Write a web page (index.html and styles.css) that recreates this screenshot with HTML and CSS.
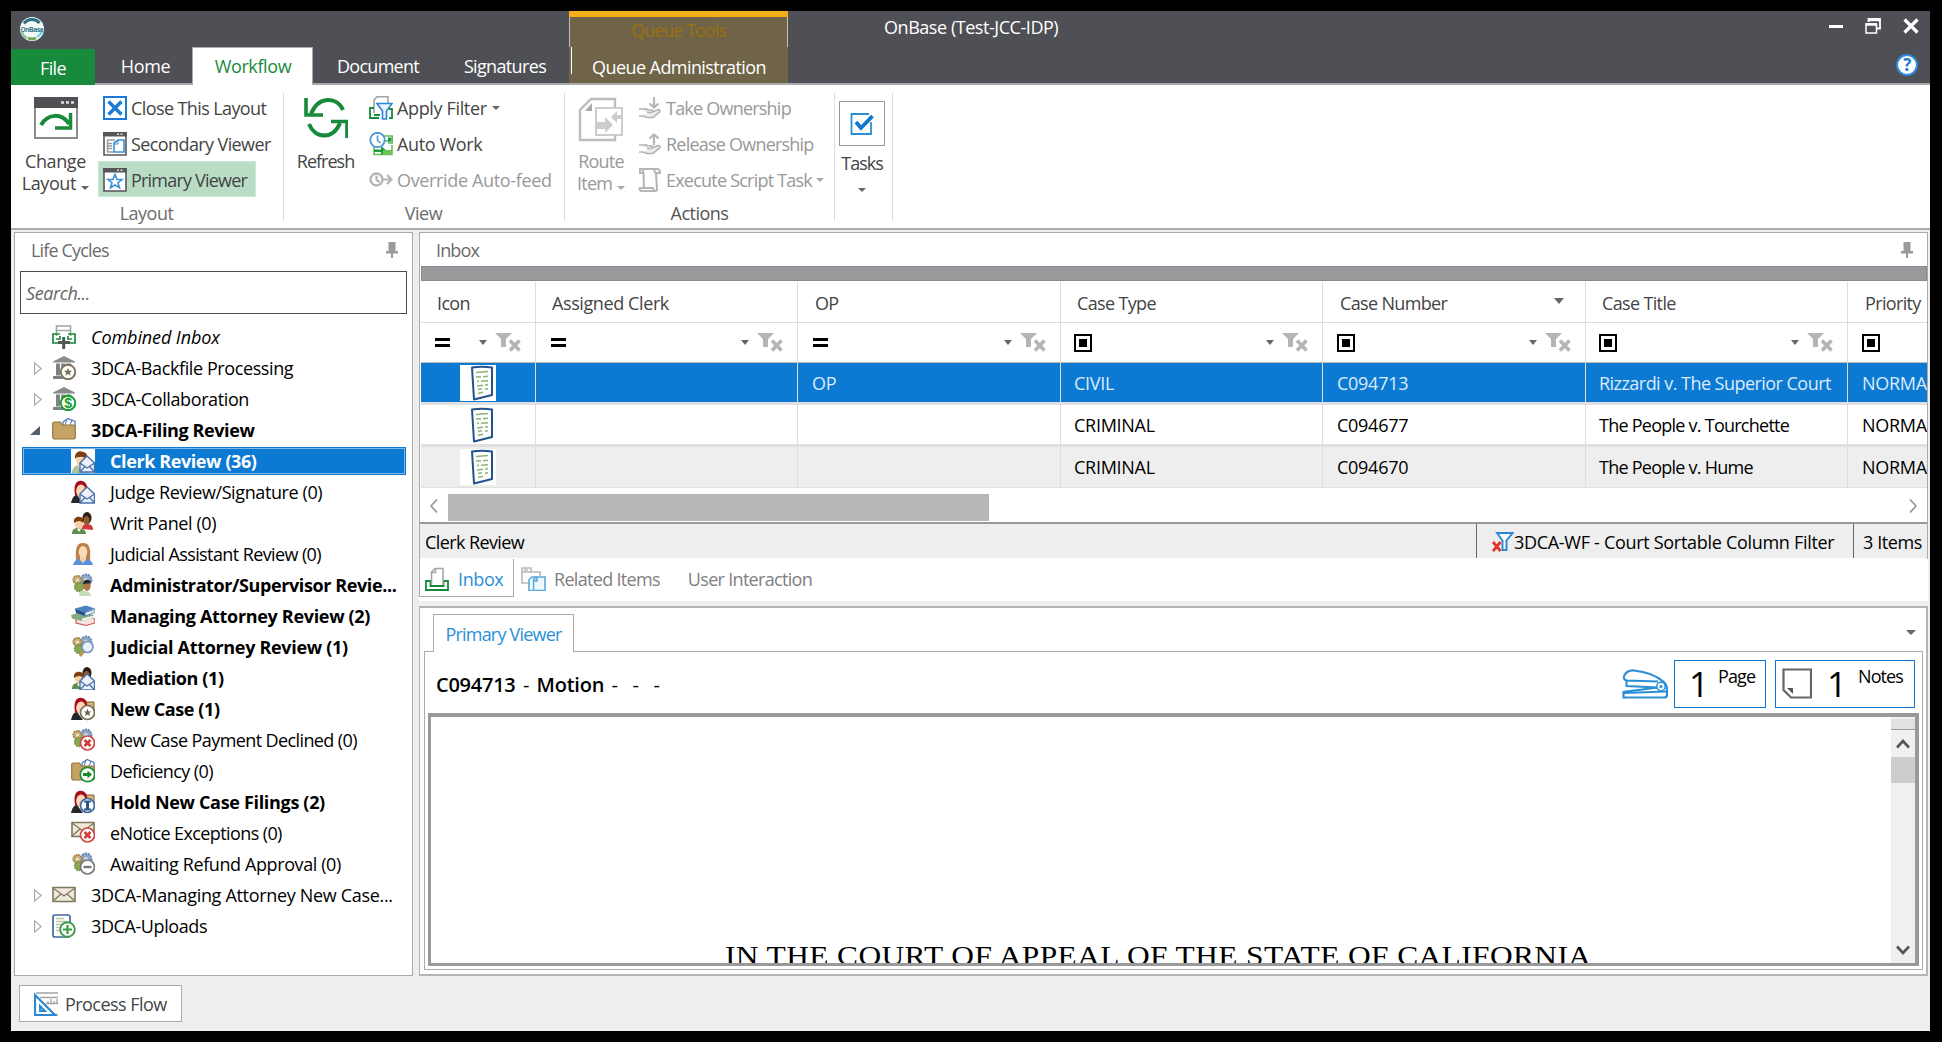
FILE: index.html
```html
<!DOCTYPE html>
<html lang="en">
<head>
<meta charset="utf-8">
<title>OnBase (Test-JCC-IDP)</title>
<link rel="stylesheet" href="styles.css">
</head>
<body>
<svg class="defs" aria-hidden="true">
  <symbol id="window" viewBox="0 0 24 24"><path d="M1 1h22v22H1z" fill="#fff" stroke="#55565a" stroke-width="1.6"/><path d="M0 0h24v4.5H0z" fill="#55565a"/><path d="M14 2.2h2m1.5 0h2m1.500h2" stroke="#ddd" stroke-width="1.4"/></symbol>
  <symbol id="man" viewBox="0 0 24 24"><path d="M1 24c0-6 4-8 8-8s9 2 9 8z" fill="#a9c29a"/><path d="M7 17l3 4 3-4z" fill="#fff"/><ellipse cx="10" cy="11" rx="5" ry="6.500" fill="#f6d3ae"/><path d="M4 10c-1-7 5-9 8-7 4 0 5 4 3 8-1-3-4-4-6-3-2 0-4 0-5 2z" fill="#7c3f10"/></symbol>
  <symbol id="redhead" viewBox="0 0 24 24"><path d="M4 15C2 4 6 0 11 1c5 1 6 6 5 13L9 17z" fill="#a60f1a"/><path d="M0 23c1-5 3-8 6-8l6 8z" fill="#25272b"/><ellipse cx="10" cy="11" rx="4.800" ry="6.500" fill="#f8d8b8"/></symbol>
  <symbol id="letter" viewBox="0 0 24 24"><path d="M9 14l7-7 7.500 7v9H9z" fill="#eef3fb" stroke="#4a6ea9" stroke-width="1.400"/><path d="M9 14l7 5 7.500-5M9 23l5-5.500M23.500 23l-5-5.500" fill="none" stroke="#4a6ea9" stroke-width="1.300"/></symbol>
  <symbol id="pair" viewBox="0 0 24 24"><path d="M11 18c0-4 2-5 5-5 4 0 6 2 6 6z" fill="#d23a3a"/><ellipse cx="16" cy="7" rx="4.500" ry="6" fill="#2c1a14"/><ellipse cx="15.500" cy="9.500" rx="3" ry="4.500" fill="#8f5a34"/><path d="M1 23c0-4 2-6 6-6s8 2 8 6z" fill="#5d8f4d"/><path d="M6 18l2 3 2-3z" fill="#fff"/><ellipse cx="8" cy="13" rx="4" ry="5" fill="#f6d0a8"/><path d="M3 12c-1-5 3-7 6-6 3 0 4 3 3 6-3-3-6-2-9 0z" fill="#7c3f10"/></symbol>
  <symbol id="woman" viewBox="0 0 24 24"><path d="M5 18C4 5 6 1 12 1s8 4 7 17z" fill="#b9824b"/><path d="M2 23c1-4 4-6 7-6h6c3 0 6 2 7 6z" fill="#5b8fd8"/><path d="M9 14h6v4l-3 3-3-3z" fill="#f6cfa5"/><ellipse cx="12" cy="10" rx="4.300" ry="6" fill="#fbdcb9"/></symbol>
  <symbol id="gears" viewBox="0 0 24 24"><circle cx="15" cy="7" r="5.500" fill="#8fa9cb" stroke="#6a89b3" stroke-width="2" stroke-dasharray="2.200 .8"/><circle cx="15" cy="7" r="2" fill="#cfdbea"/><circle cx="6.500" cy="7" r="4.200" fill="#cbb07a" stroke="#a68340" stroke-width="1.800" stroke-dasharray="1.800 .7"/><circle cx="6.500" cy="7" r="1.500" fill="#eee6d4"/><circle cx="8" cy="14" r="4.200" fill="#8aa752" stroke="#7a9548" stroke-width="2" stroke-dasharray="1.800 .7"/></symbol>
  <symbol id="bank" viewBox="0 0 24 24"><path d="M1 5.500L12 0l11 5.500v1H1z" fill="#8a8b8e"/><path d="M4 7.500h4v12H4zM9.200 7.500h4v12h-4zM14.500 7.500h4.500v12h-4.500zM1 20h14v3H1z" fill="#808184"/></symbol>
  <symbol id="folder" viewBox="0 0 24 24"><path d="M11 4l5-3.500 7 3V10H11z" fill="#fff" stroke="#4a78b8" stroke-width="1.200"/><path d="M15 1l-2 6M20 2l-2 5" stroke="#4a78b8"/><path d="M.7 6Q.7 4 2.500 4h6l1.500 3h12q1.300 0 1.300 1.500V19q0 2-2 2H3Q.7 21 .7 19z" fill="#c5a365" stroke="#97783f" stroke-width="1.200"/></symbol>
  <symbol id="mail" viewBox="0 0 24 24"><path d="M1 4.500h22v14H1z" fill="#efe9da" stroke="#81765f" stroke-width="1.600"/><path d="M1 5l11 8L23 5M1 18l8-7M23 18l-8-7" fill="none" stroke="#81765f" stroke-width="1.300"/></symbol>
  <symbol id="star" viewBox="0 0 24 24"><path d="M12 2l3 7h7l-5.500 4.500 2 7.500L12 17l-6.500 4 2-7.500L2 9h7z"/></symbol>
  <symbol id="inbox" viewBox="0 0 24 24"><path d="M1 14h4.500v5h13v-5H23v9H1z" fill="#fff" stroke="#178a3b" stroke-width="1.800"/><path d="M6.500 18V5L10 1.500h8V18" fill="#fff" stroke="#a2a3a6" stroke-width="1.500"/><path d="M10.500 2v3.500H7" fill="none" stroke="#a2a3a6" stroke-width="1.500"/></symbol>
  <symbol id="funnelx" viewBox="0 0 26 20"><path d="M0 0h17l-6 6v8H6V6z" fill="#b5b5b5"/><path d="M15 7.500l9.500 10M24.500 7.500L15 17.500" stroke="#b5b5b5" stroke-width="3.600"/></symbol>
  <symbol id="paper" viewBox="0 0 36 36"><path d="M12 2.500Q22 1 32 2.500V30l-18 4.500z" fill="#fdfefd" stroke="#21548c" stroke-width="2" stroke-linejoin="round"/><path d="M16 7.500l12-1M16 12l5-.3m2 0l5-.4M17 16.500l2-.2m2 0l7-.6M17 21l6-.8m2 0l3-.6M18 24.500l4-.8M18 28.500l5-1.200m2-3l3-.6" stroke="#8fb376" stroke-width="1.500"/></symbol>
  <symbol id="pin" viewBox="0 0 12 16"><path d="M2.500 0h7v9H12v2.500H7V16H5v-4.500H0V9h2.500z" fill="#9a9a9c"/></symbol>
  <symbol id="hand" viewBox="0 0 24 24"><path d="M1 13h5q2-.5 4 1h4q1.500 2-1 2.500H9M14 16l6-2.500q3 0 1.500 2.500L15 21.500H9L5 20H1" fill="#eee" stroke="#b5b5b5" stroke-width="1.700"/></symbol>
  <symbol id="closed" viewBox="0 0 8 13"><path d="M.6.800v11.400L7.200 6.500z" fill="#fff" stroke="#a6a6a6" stroke-width="1.100"/></symbol>
</svg>

<div class="window">
  <header class="titlebar">
    <div class="tabs-side">
      <div class="logo-row">
        <svg class="logo" viewBox="0 0 24 24"><circle cx="12" cy="12" r="12" fill="#f4f8f6"/><path d="M4 6.500A9.800 9.800 0 0 1 19.500 6" fill="none" stroke="#2c7180" stroke-width="3"/><path d="M2 15a10 10 0 0 0 5 6" fill="none" stroke="#7fc4a0" stroke-width="2"/><path d="M8 21a10 10 0 0 0 8 0" fill="none" stroke="#69a84f" stroke-width="2.500"/><path d="M17 20a10 10 0 0 0 5-7" fill="none" stroke="#55d3ee" stroke-width="2"/><text x="12" y="14.500" text-anchor="middle" class="logo-text">OnBase</text></svg>
      </div>
      <nav class="tabs">
        <a class="tab file"><span>File</span></a>
        <a class="tab home"><span>Home</span></a>
        <a class="tab active"><span>Workflow</span></a>
        <a class="tab document"><span>Document</span></a>
        <a class="tab signatures"><span>Signatures</span></a>
      </nav>
    </div>
    <div class="context">
      <div class="context-name"><span>Queue Tools</span></div>
      <div class="context-tab"><span>Queue Administration</span></div>
    </div>
    <div class="caption"><span>OnBase (Test-JCC-IDP)</span></div>
    <div class="controls">
      <div class="control-row">
        <svg width="14" height="16" viewBox="0 0 14 16"><path d="M0 8.500h14" stroke="#fff" stroke-width="3"/></svg>
        <svg width="16" height="16" viewBox="0 0 16 16"><path d="M3.500 4V1h11.500v9.500h-3" fill="none" stroke="#fff" stroke-width="1.800"/><path d="M1 6h10.500v9H1z" fill="none" stroke="#fff" stroke-width="1.500"/><path d="M3 2h12M.5 6.500H12" stroke="#fff" stroke-width="2.500"/></svg>
        <svg width="16" height="16" viewBox="0 0 16 16"><path d="M1.500 1.500l13 13M14.500 1.500l-13 13" stroke="#fff" stroke-width="3.200"/></svg>
      </div>
      <div class="help">?</div>
    </div>
  </header>

  <section class="ribbon">
    <div class="group layout">
      <div class="group-body">
        <div class="big change">
          <svg width="44" height="42" viewBox="0 0 44 42"><path d="M1 1h42v40H1z" fill="#fff" stroke="#8a8b8e" stroke-width="2"/><path d="M0 0h44v11H0z" fill="#505155"/><path d="M27 5.500h3m2 0h3m2 0h3" stroke="#ddd" stroke-width="2.500"/><path d="M7 28c7-12 21-12 28-1" fill="none" stroke="#178a3b" stroke-width="4"/><path d="M36.500 16v15H21" fill="none" stroke="#178a3b" stroke-width="3.500"/></svg>
          <span>Change</span><span>Layout <i class="caret low"></i></span>
        </div>
        <div class="stack">
          <div class="cmd"><svg width="24" height="24" viewBox="0 0 24 24"><path d="M1 1h22v22H1z" fill="#fff" stroke="#1a7bd2" stroke-width="2"/><path d="M5.500 5.500l13 13M18.500 5.500l-13 13" stroke="#1a7bd2" stroke-width="3.400"/></svg><span>Close This Layout</span></div>
          <div class="cmd"><svg width="24" height="24" viewBox="0 0 24 24"><use href="#window"/><path d="M12 8H4.500v12H10M5 11.500h4M5 14h4M5 16.500h4" fill="none" stroke="#9a9a9c" stroke-width="1.400"/><path d="M11 11l4-3h6v12H11z" fill="#fff" stroke="#3a8fd8" stroke-width="1.600"/><path d="M11.500 12H15V8.500" fill="none" stroke="#3a8fd8"/></svg><span>Secondary Viewer</span></div>
          <div class="cmd on"><svg width="24" height="24" viewBox="0 0 24 24"><use href="#window"/><path d="M12 6.500l2 5h5l-4 3.200 1.500 5L12 17l-4.500 2.700 1.500-5-4-3.200h5z" fill="#fff" stroke="#3a8fd8" stroke-width="1.600"/></svg><span>Primary Viewer</span></div>
        </div>
      </div>
      <div class="group-name">Layout</div>
    </div>
    <div class="group view">
      <div class="group-body">
        <div class="big refresh">
          <svg width="44" height="42" viewBox="0 0 44 42"><path d="M7 17C14-1 33-1 39 13M5 27c6 15 24 16 31-1" fill="none" stroke="#178a3b" stroke-width="4"/><path d="M2 1v17h17M43 41V24.500H27" fill="none" stroke="#178a3b" stroke-width="3.600"/></svg>
          <span>Refresh</span>
        </div>
        <div class="stack">
          <div class="cmd"><svg width="24" height="24" viewBox="0 0 24 24"><path d="M5 17V4l3-3.200h11V8" fill="none" stroke="#a2a3a6" stroke-width="1.600"/><path d="M5 12H1v10h9M20 13h3v9h-3M5 19h6" fill="none" stroke="#178a3b" stroke-width="1.800"/><path d="M8 7.500h15l-5.500 7.500v8h-4v-8z" fill="#e8f3fc" stroke="#2b87d3" stroke-width="1.600"/></svg><span>Apply Filter</span><i class="caret"></i></div>
          <div class="cmd"><svg width="24" height="24" viewBox="0 0 24 24"><path d="M13 4h10.300v7H20V9h-4M5 14v8.500h18V13" fill="#fff" stroke="#62bd52" stroke-width="1.600"/><path d="M19 5.500h3.500v4H19zM5 17.500h7V14l6 5-6 4v-3H5z" fill="#1f9a3c"/><path d="M14 18h9v5h-9z" fill="#6cc355"/><circle cx="8.500" cy="8" r="7.200" fill="#fff" stroke="#4b97d9" stroke-width="1.800"/><path d="M8.500 3.500v5l3 2.500" fill="none" stroke="#4b97d9" stroke-width="1.600"/></svg><span>Auto Work</span></div>
          <div class="cmd off"><svg width="24" height="24" viewBox="0 0 24 24"><circle cx="7.500" cy="11.500" r="6" fill="none" stroke="#b5b5b5" stroke-width="2.400"/><path d="M7.500 7.500V12l3 2M13 11.500h9M18 7l4.500 4.500L18 16" fill="none" stroke="#b5b5b5" stroke-width="2.200"/></svg><span>Override Auto-feed</span></div>
        </div>
      </div>
      <div class="group-name">View</div>
    </div>
    <div class="group actions">
      <div class="group-body">
        <div class="big route off">
          <svg width="46" height="46" viewBox="0 0 46 46"><path d="M2 43V13L13 2h24v41z" fill="#fff" stroke="#bdbdbd" stroke-width="2.400"/><path d="M7 14l7-8v8z" fill="#aaa"/><path d="M18 11h26v27H18z" fill="#fff" stroke="#ccc" stroke-width="2"/><path d="M19 25h8v-5l8 8-8 8v-4h-8zM44 18h-5v-4l-6 6 6 6v-4h5z" fill="#ccc"/></svg>
          <span>Route</span><span>Item <i class="caret low"></i></span>
        </div>
        <div class="stack">
          <div class="cmd off"><svg width="24" height="24" viewBox="0 0 24 24"><use href="#hand"/><path d="M16 1v10M11.500 7.500l4.500 4 4.500-4" fill="none" stroke="#b5b5b5" stroke-width="2.200"/></svg><span>Take Ownership</span></div>
          <div class="cmd off"><svg width="24" height="24" viewBox="0 0 24 24"><use href="#hand"/><path d="M16 13V2.500M11.500 6.500l4.500-4 4.500 4" fill="none" stroke="#b5b5b5" stroke-width="2.200"/></svg><span>Release Ownership</span></div>
          <div class="cmd off"><svg width="24" height="24" viewBox="0 0 24 24"><path d="M6 20L5.500 5H2V1h17q3 0 3 4h-4l1 17q-1 1.500-3 1H3q-2-1-1-3h13l1 3M5 5V2M17 1q-1 1 0 4" fill="none" stroke="#b5b5b5" stroke-width="2"/></svg><span>Execute Script Task</span><i class="caret"></i></div>
        </div>
      </div>
      <div class="group-name dark">Actions</div>
    </div>
    <div class="group tasks">
      <div class="tasks-box"><svg width="24" height="24" viewBox="0 0 24 24"><path d="M21 10v12H1.500V2H19" fill="none" stroke="#2b8fd6" stroke-width="1.800"/><path d="M6 10l5 6L22.500 4" fill="none" stroke="#0f78cc" stroke-width="3.800"/></svg></div>
      <span>Tasks</span>
      <i class="caret"></i>
    </div>
  </section>

  <main class="workspace">
    <div class="left">
      <section class="panel cycles">
        <div class="panel-title"><span>Life Cycles</span><svg width="12" height="16"><use href="#pin"/></svg></div>
        <div class="search"><span>Search...</span></div>
        <ul class="tree">
          <li class="italic"><b class="twist"></b><svg viewBox="0 0 24 24"><path d="M4.500 11V1h14v10" fill="#fff" stroke="#a2a3a6" stroke-width="1.600"/><path d="M5 5.500h14" stroke="#a2a3a6" stroke-width="1.400"/><path d="M8 9H1v9h5M16 9h7v9h-5M4 14h4v-3M20 14h-4v-3" fill="none" stroke="#178a3b" stroke-width="1.700"/><path d="M11.700 12v12M6 17.500h12" stroke="#55565a" stroke-width="3"/></svg><span>Combined Inbox</span></li>
          <li><b class="twist"><svg class="arrow"><use href="#closed"/></svg></b><svg viewBox="0 0 24 24"><use href="#bank"/><circle cx="16" cy="16" r="7.200" fill="#fff" stroke="#7c7157" stroke-width="1.900"/><use href="#star" x="11" y="11" width="10" height="10" fill="#7c7157"/></svg><span>3DCA-Backfile Processing</span></li>
          <li><b class="twist"><svg class="arrow"><use href="#closed"/></svg></b><svg viewBox="0 0 24 24"><use href="#bank"/><circle cx="16" cy="16" r="7.200" fill="#fff" stroke="#159a2c" stroke-width="1.900"/><text x="16" y="20.800" text-anchor="middle" class="dollar">$</text></svg><span>3DCA-Collaboration</span></li>
          <li class="bold"><b class="twist"><svg class="arrow expanded" viewBox="0 0 10 9"><path d="M10 0v9H0z" fill="#56616e"/></svg></b><svg viewBox="0 0 24 24"><use href="#folder"/></svg><span>3DCA-Filing Review</span></li>
          <li class="sub bold selected"><svg viewBox="0 0 24 24"><path d="M0 0h24v24H0z" fill="#fff"/><use href="#man"/><use href="#letter"/></svg><span>Clerk Review (36)</span></li>
          <li class="sub"><svg viewBox="0 0 24 24"><use href="#redhead"/><use href="#letter"/></svg><span>Judge Review/Signature (0)</span></li>
          <li class="sub"><svg viewBox="0 0 24 24"><use href="#pair"/></svg><span>Writ Panel (0)</span></li>
          <li class="sub tight"><svg viewBox="0 0 24 24"><use href="#woman"/></svg><span>Judicial Assistant Review (0)</span></li>
          <li class="sub bold"><svg viewBox="0 0 24 24"><use href="#gears"/><path d="M8 23c0-4 2-5 5-5s7 1 7 5z" fill="#c4dcb4"/><ellipse cx="16" cy="13" rx="3.500" ry="5" fill="#b07748"/><path d="M12 11c0-5 7-6 8-1z" fill="#222"/></svg><span>Administrator/Supervisor Revie...</span></li>
          <li class="sub bold wide"><svg viewBox="0 0 24 24"><path d="M5 15l11-2 8 2v4l-9 2.500L5 19z" fill="#f6e3e0" stroke="#c4574a" stroke-width="1.200"/><path d="M0 11l10-3 13 3v3L11 17l-10-2.500z" fill="#86ab7d"/><path d="M11 14.500l12-3v2.500l-12 3z" fill="#eef3ec"/><path d="M4 4.500L15 1.500l9 3L14 8.500z" fill="#4c82c0"/><path d="M4 4.500l10 4V12l-9-3z" fill="#24548f"/><path d="M14 8.500l10-3v3L14 12z" fill="#e5ecf4" stroke="#3b6ca8" stroke-width=".7"/></svg><span>Managing Attorney Review (2)</span></li>
          <li class="sub bold wide"><svg viewBox="0 0 24 24"><use href="#gears"/><path d="M9 21l4-5" stroke="#b69a4c" stroke-width="3"/><circle cx="16.500" cy="12" r="5.500" fill="#e6effa" stroke="#7193bf" stroke-width="1.600"/></svg><span>Judicial Attorney Review (1)</span></li>
          <li class="sub bold"><svg viewBox="0 0 24 24"><use href="#pair"/><use href="#letter" x="0" y="1"/></svg><span>Mediation (1)</span></li>
          <li class="sub bold"><svg viewBox="0 0 24 24"><path d="M9 5h14v10H9z" fill="#d3b577" stroke="#7c6232"/><use href="#redhead"/><circle cx="16.500" cy="15.500" r="7" fill="#fff" stroke="#7c7157" stroke-width="1.700"/><use href="#star" x="12" y="11" width="9" height="9" fill="#6a6048"/></svg><span>New Case (1)</span></li>
          <li class="sub tight"><svg viewBox="0 0 24 24"><use href="#gears"/><circle cx="16.500" cy="15" r="7" fill="#fff" stroke="#cf4a44" stroke-width="1.700"/><path d="M13.500 12l6 6m0-6l-6 6" stroke="#cf3b36" stroke-width="2.600"/></svg><span>New Case Payment Declined (0)</span></li>
          <li class="sub tight"><svg viewBox="0 0 24 24"><use href="#folder"/><circle cx="16.500" cy="15.500" r="7.200" fill="#fff" stroke="#1f8f34" stroke-width="1.700"/><path d="M12 14h4.500v-2.500l4.500 4-4.500 4V17H12z" fill="#158a2a"/></svg><span>Deficiency (0)</span></li>
          <li class="sub bold wide"><svg viewBox="0 0 24 24"><path d="M9 5h14v10H9z" fill="#d3b577" stroke="#7c6232"/><use href="#redhead"/><circle cx="16.500" cy="15.500" r="7" fill="#fff" stroke="#3d679f" stroke-width="1.700"/><path d="M13 11.500h7M13 19.500h7" stroke="#2a578f" stroke-width="2"/><path d="M16.500 11v9" stroke="#2a578f" stroke-width="3"/></svg><span>Hold New Case Filings (2)</span></li>
          <li class="sub tight"><svg viewBox="0 0 24 24"><use href="#mail" y="-3"/><circle cx="16.500" cy="14" r="7" fill="#fff" stroke="#cf4a44" stroke-width="1.700"/><path d="M13.500 11l6 6m0-6l-6 6" stroke="#cf3b36" stroke-width="2.600"/></svg><span>eNotice Exceptions (0)</span></li>
          <li class="sub"><svg viewBox="0 0 24 24"><use href="#gears"/><circle cx="16.500" cy="15" r="7" fill="#fff" stroke="#77787b" stroke-width="1.700"/><path d="M12.500 15h8" stroke="#77787b" stroke-width="2.400"/></svg><span>Awaiting Refund Approval (0)</span></li>
          <li class="wide"><b class="twist"><svg class="arrow"><use href="#closed"/></svg></b><svg viewBox="0 0 24 24"><use href="#mail"/></svg><span>3DCA-Managing Attorney New Case...</span></li>
          <li><b class="twist"><svg class="arrow"><use href="#closed"/></svg></b><svg viewBox="0 0 24 24"><rect x="1" y="1" width="17" height="22" rx="2" fill="#fff" stroke="#3f68a0" stroke-width="1.700"/><path d="M4 4.500h8M4 7.500h11M4 10.500h8M4 13.500h5M4 16.500h4" stroke="#b6c7a8" stroke-width="1.300"/><circle cx="15.500" cy="15.500" r="7.300" fill="#fff" stroke="#3f9a48" stroke-width="1.900"/><path d="M15.500 11v9M11 15.500h9" stroke="#3f9a48" stroke-width="2.200"/></svg><span>3DCA-Uploads</span></li>
        </ul>
      </section>
      <div class="process"><svg width="24" height="24" viewBox="0 0 24 24"><path d="M2 1h22M6 5.500h18M16 22.500h8" stroke="#a2a3a6" stroke-width="1.500"/><path d="M12 11.500h12M14 11V9m3 2V7m3 4V9m3 2V7" stroke="#a2a3a6" stroke-width="1.300"/><path d="M1 3l20 20H1z" fill="#fff" stroke="#2b87d3" stroke-width="2.200"/><path d="M6 14l5 5H6z" fill="#e8f3fc" stroke="#2b87d3" stroke-width="2"/></svg><span>Process Flow</span></div>
    </div>

    <div class="right">
      <section class="panel inbox">
        <div class="panel-title"><span>Inbox</span><svg width="12" height="16"><use href="#pin"/></svg></div>
        <div class="groupbar"></div>
        <div class="row head">
          <div><span>Icon</span></div><div><span>Assigned Clerk</span></div><div><span>OP</span></div><div><span>Case Type</span></div><div><span>Case Number</span><i class="caret sort"></i></div><div><span>Case Title</span></div><div><span>Priority</span></div>
        </div>
        <div class="row filter">
          <div><b class="equals"></b><i class="caret"></i><svg width="26" height="20"><use href="#funnelx"/></svg></div>
          <div><b class="equals"></b><i class="caret"></i><svg width="26" height="20"><use href="#funnelx"/></svg></div>
          <div><b class="equals"></b><i class="caret"></i><svg width="26" height="20"><use href="#funnelx"/></svg></div>
          <div><b class="box"></b><i class="caret"></i><svg width="26" height="20"><use href="#funnelx"/></svg></div>
          <div><b class="box"></b><i class="caret"></i><svg width="26" height="20"><use href="#funnelx"/></svg></div>
          <div><b class="box"></b><i class="caret"></i><svg width="26" height="20"><use href="#funnelx"/></svg></div>
          <div><b class="box"></b></div>
        </div>
        <div class="row data chosen">
          <div class="pic"><svg width="36" height="36"><use href="#paper"/></svg></div><div></div><div><span>OP</span></div><div><span>CIVIL</span></div><div><span>C094713</span></div><div><span class="name">Rizzardi v. The Superior Court</span></div><div><span>NORMA</span></div>
        </div>
        <div class="row data">
          <div class="pic"><svg width="36" height="36"><use href="#paper"/></svg></div><div></div><div></div><div><span>CRIMINAL</span></div><div><span>C094677</span></div><div><span class="name tighter">The People v. Tourchette</span></div><div><span>NORMA</span></div>
        </div>
        <div class="row data alt">
          <div class="pic"><svg width="36" height="36"><use href="#paper"/></svg></div><div></div><div></div><div><span>CRIMINAL</span></div><div><span>C094670</span></div><div><span class="name tighter">The People v. Hume</span></div><div><span>NORMA</span></div>
        </div>
        <div class="hscroll">
          <svg width="8" height="14" viewBox="0 0 8 14"><path d="M7 .5L1 7l6 6.500" fill="none" stroke="#929395" stroke-width="1.600"/></svg>
          <div class="thumb"></div>
          <svg class="end" width="8" height="14" viewBox="0 0 8 14"><path d="M1 .5L7 7l-6 6.500" fill="none" stroke="#929395" stroke-width="1.600"/></svg>
        </div>
        <div class="status">
          <div class="queue"><span>Clerk Review</span></div>
          <div class="applied"><svg width="22" height="20" viewBox="0 0 22 20"><path d="M5 1h15.500l-6 7.500V18h-4V8.500z" fill="#fff" stroke="#2b87d3" stroke-width="1.900"/><path d="M1 10l7.500 9M8.500 10L1 19" stroke="#e0362c" stroke-width="2.800"/></svg><span>3DCA-WF - Court Sortable Column Filter</span></div>
          <div class="count"><span>3 Items</span></div>
        </div>
      </section>
      <div class="subtabs">
        <div class="subtab current"><svg width="24" height="24"><use href="#inbox"/></svg><span>Inbox</span></div>
        <div class="subtab related"><svg width="25" height="24" viewBox="0 0 25 24"><path d="M8 16H1V1h9v4h9v4M1 5h18M3 3h4" fill="none" stroke="#b9babc" stroke-width="1.600"/><path d="M8 12.500L11 10h4v13.500H8z" fill="#fff" stroke="#5aa9df" stroke-width="1.600"/><path d="M12.500 12l2.500-2h9v13.500H12.500zM12.500 14H16v-4" fill="#eef7fd" stroke="#5aa9df" stroke-width="1.600"/></svg><span>Related Items</span></div>
        <div class="subtab user"><span>User Interaction</span></div>
      </div>
      <section class="viewer">
        <div class="viewer-tabs"><div class="viewer-tab"><span>Primary Viewer</span></div><i class="caret"></i></div>
        <div class="viewer-body">
          <div class="doc-head">
            <div class="doc-title"><b>C094713</b><i>-</i><b>Motion</b><i>-</i><i>-</i><i>-</i></div>
            <svg class="stapler" width="46" height="30" viewBox="0 0 46 30"><path d="M2 7Q5 1 12 1.500q19 2 29 11 4 3 4 8v5q0 3-3 3H1.500V23l34-4.500" fill="none" stroke="#2b8fd6" stroke-width="2.200"/><path d="M2 7q-1 4 3 4.500l31 1M4.500 12v5l31 1.500M2 24l42-1.500" fill="none" stroke="#2b8fd6" stroke-width="2"/><circle cx="39" cy="17.500" r="4.200" fill="#fff" stroke="#2b8fd6" stroke-width="1.500"/><circle cx="39" cy="17.500" r="1.600" fill="#2b8fd6"/></svg>
            <div class="counter page"><strong>1</strong><span>Page</span></div>
            <div class="counter notes"><svg width="30" height="31" viewBox="0 0 30 31"><path d="M1.500 1.500h27.500v28H9L1.500 22z" fill="#fff" stroke="#66676b" stroke-width="2.200"/><path d="M5 20h6v6z" fill="#55565a"/></svg><strong>1</strong><span>Notes</span></div>
          </div>
          <div class="doc">
            <div class="sheet"><p>IN THE COURT OF APPEAL OF THE STATE OF CALIFORNIA</p></div>
            <div class="vscroll"><div class="split"></div><svg width="14" height="10" viewBox="0 0 14 10"><path d="M1 8.500L7 2l6 6.500" fill="none" stroke="#555" stroke-width="2.600"/></svg><div class="vthumb"></div><svg class="down" width="14" height="10" viewBox="0 0 14 10"><path d="M1 1.500L7 8l6-6.500" fill="none" stroke="#555" stroke-width="2.600"/></svg></div>
          </div>
        </div>
      </section>
    </div>
  </main>
</div>
</body>
</html>
```
FILE: styles.css
```css
* { box-sizing: border-box; }

body {
  margin: 0;
  padding: 11px 12px 11px 11px;
  height: 1042px;
  overflow: hidden;
  background: #000;
  color: #000;
  font: 18px/24px "Open Sans", "Noto Sans", sans-serif;
  letter-spacing: -0.4px;
  white-space: nowrap;
}

svg { display: block; flex: none; }
.defs { position: absolute; width: 0; height: 0; }

.window {
  height: 1020px;
  display: flex;
  flex-direction: column;
  background: #eee;
}

.caret {
  display: inline-block;
  flex: none;
  border: 4px solid transparent;
  border-top: 4px solid #666;
  border-bottom: 0;
}
.off .caret { border-top-color: #aaa; }
.caret.low { margin-left: 1px; }

/* title bar */
.titlebar {
  height: 74px;
  flex: none;
  display: flex;
  background: #4f5055;
  border-bottom: 2px solid #aaa;
  color: #fff;
}
.tabs-side { width: 558px; flex: none; }
.logo-row { height: 36px; padding: 6px 0 0 9px; }
.logo { width: 24px; height: 24px; }
.logo-text { font: bold 6.5px "Liberation Sans", sans-serif; letter-spacing: -0.3px; fill: #2a6f80; }
.tabs { display: flex; height: 38px; }
.tab { height: 36px; display: flex; align-items: center; justify-content: center; padding-top: 2px; }
.tab.file { width: 84px; margin-top: 2px; background: #178a3b; letter-spacing: -0.6px; }
.tab.home { width: 97px; padding-left: 4px; }
.tab.active { width: 121px; height: 38px; padding: 0 0 1px 1px; background: #fff; color: #178a3b; border: 1px solid #aaa; border-bottom: 0; }
.tab.document { width: 130px; letter-spacing: -0.7px; }
.tab.signatures { width: 124px; letter-spacing: -0.65px; }
.context {
  width: 219px;
  height: 72px;
  flex: none;
  border-top: 6px solid #f5ad1a;
  background: #6f6447;
  text-align: center;
}
.context-name { height: 30px; padding-top: 1px; color: #9b7010; border: solid #c9c0ab; border-width: 0 1px; letter-spacing: -1px; }
.context-tab { height: 27px; line-height: 40px; margin-left: 2px; border-left: 1px solid #fff; letter-spacing: -0.57px; padding-right: 2px; }
.caption { width: 365px; flex: none; padding: 4px 0 0 96px; letter-spacing: -0.45px; }
.controls { flex: 1; display: flex; flex-direction: column; align-items: flex-end; padding: 7px 11px 0 0; }
.control-row { display: flex; gap: 22px; }
.help {
  width: 22px;
  height: 22px;
  margin: 20px 1px 0 0;
  border: 2px solid #2b8ae0;
  border-radius: 50%;
  background: #fff;
  color: #1a7bd2;
  font: bold 17px/18px "Open Sans", sans-serif;
  text-align: center;
}

/* ribbon */
.ribbon {
  height: 145px;
  flex: none;
  display: flex;
  padding-top: 8px;
  background: #fff;
  border-bottom: 2px solid #aaa;
  color: #444;
}
.group { height: 128px; border-right: 1px solid #ddd; }
.group.layout { width: 273px; }
.group.view { width: 281px; }
.group.actions { width: 270px; }
.group.tasks { width: 58px; display: flex; flex-direction: column; align-items: center; padding: 8px 3px 0 0; letter-spacing: -1px; }
.group-body { display: flex; height: 114px; }
.group-name { height: 24px; text-align: center; color: #6b6b6b; margin-top: -6px; padding-right: 1px; letter-spacing: -0.5px; }
.group-name.dark { color: #555; padding-right: 0; }
.big { display: flex; flex-direction: column; align-items: center; line-height: 22px; padding-top: 4px; flex: none; }
.big svg { margin-bottom: 11px; }
.change { width: 87px; padding-left: 2px; }
.refresh { width: 80px; padding-left: 3px; letter-spacing: -1px; }
.route { width: 68px; padding-left: 4px; letter-spacing: -0.8px; }
.route svg { margin-bottom: 7px; }
.stack { display: flex; flex-direction: column; margin-top: -3px; align-items: flex-start; }
.cmd { display: flex; align-items: center; gap: 4px; height: 35px; padding: 1px 7px 0 4px; border: 1px solid transparent; }
.cmd + .cmd { height: 36px; }
.cmd.on { width: 158px; background: #b9dcc5; border-color: #cde8d6; letter-spacing: -0.8px; }
.layout .cmd:not(.on) { letter-spacing: -0.6px; }
.view .caret { margin-left: 1px; }
.view .cmd { letter-spacing: -0.35px; }
.actions .cmd { letter-spacing: -0.78px; }
.off { color: #999; }
.tasks-box { width: 46px; height: 45px; padding: 10px; border: 1px solid #999; margin-bottom: 5px; }
.tasks .caret { margin-top: 13px; }

/* workspace */
.workspace { flex: 1; display: flex; gap: 6px; padding: 2px 2px 0 3px; min-height: 0; }
.left { width: 399px; flex: none; }
.panel { background: #fff; border: 1px solid #aaa; }
.panel-title { height: 33px; display: flex; justify-content: space-between; padding: 5px 14px 0 16px; color: #6b6b6b; letter-spacing: -0.85px; }
.panel-title svg { margin-top: 4px; }
.cycles { height: 744px; }
.search { height: 43px; margin: 5px; border: 1px solid #4c4d52; padding: 9px 5px; font-style: italic; color: #666; }
.tree { list-style: none; margin: 9px 6px 0 7px; padding: 0; }
.tree li { height: 28px; margin-bottom: 3px; display: flex; align-items: center; padding-left: 8px; }
.tree svg { width: 24px; height: 24px; margin-right: 15px; }
.tree li.sub { padding-left: 49px; }
.tree li.italic { letter-spacing: -0.1px; }
.tree li.tight { letter-spacing: -0.6px; }
.tree li.wide { letter-spacing: -0.32px; }
.dollar { font: bold 14px "Liberation Sans", sans-serif; fill: #159a2c; }
.italic { font-style: italic; }
.bold { font-weight: 700; }
.selected { background: #0c79d3; color: #fff; outline: 1px solid #7db8ea; outline-offset: -2px; }
.twist { width: 22px; flex: none; }
.tree .arrow { width: 8px; height: 13px; margin: 0 0 0 4px; }
.tree .expanded { width: 10px; height: 9px; margin: 0; }
.process {
  display: inline-flex;
  align-items: center;
  gap: 7px;
  width: 163px;
  height: 37px;
  margin: 9px 0 0 5px;
  padding: 0 14px;
  background: #fff;
  border: 1px solid #aaa;
  color: #444;
  letter-spacing: -0.55px;
}

.right { flex: 1; min-width: 0; display: flex; flex-direction: column; }
.inbox { height: 328px; }
.inbox .panel-title { padding-right: 14px; }
.groupbar { height: 15px; margin: 0 0 1px 1px; background: #999a9c; border: 1px solid #888b94; }
.row { display: grid; grid-template-columns: 115px 262px 263px 262px 263px 262px 1fr; margin-left: 1px; overflow: hidden; }
.row > div { display: flex; align-items: center; border-right: 1px solid #ddd; min-width: 0; }
.row > div:last-child { border-right: 0; overflow: hidden; }
.head { height: 41px; border-bottom: 1px solid #ddd; color: #444; letter-spacing: -0.65px; }
.head > div { padding: 1px 0 0 16px; }
.head > div:nth-child(2) { letter-spacing: -0.4px; }
.head > div:nth-child(3), .head > div:nth-child(5), .head > div:nth-child(7) { padding-left: 17px; }
.caret.sort { border-width: 6px 5px 0; margin: 0 21px 4px auto; }
.filter { height: 40px; border-bottom: 1px solid #bbb; }
.filter > div { padding: 0 14px 0 15px; }
.filter > div:first-child { padding-left: 14px; }
.equals { width: 15px; height: 9px; border: solid #000; border-width: 3px 0; }
.box { width: 18px; height: 18px; border: 2px solid #000; background: #000; box-shadow: inset 0 0 0 3px #fff; margin-left: -2px; }
.filter > div:nth-child(5) .box, .filter > div:nth-child(7) .box { margin-left: -1px; }
.filter .caret { border-width: 5px 4.5px 0; margin: 0 8px 0 auto; }
.data { height: 42px; border-bottom: 3px solid #e0e0e0; letter-spacing: -0.27px; }
.data > div { padding-left: 14px; }
.data > div:nth-child(4), .data > div:nth-child(6) { padding-left: 13px; }
.data > .pic { padding-left: 39px; }
.name { letter-spacing: -0.54px; }
.name.tighter { letter-spacing: -0.75px; }
.data.chosen { color: #dcebf9; background: #0c79d3; }
.pic svg { background: #fff; }
.data.alt { background: #eee; height: 41px; border-bottom-width: 1px; }
.hscroll { height: 34px; display: flex; align-items: center; padding: 2px 10px 0; }
.hscroll .thumb { width: 541px; height: 27px; margin: 2px 0 0 10px; background: #b6b7b9; }
.hscroll .end { margin-left: auto; }
.status { height: 36px; display: flex; background: #eee; border-top: 2px solid #999; }
.status > div { display: flex; align-items: center; border-right: 1px solid #666; padding-top: 2px; }
.queue { width: 1057px; padding-left: 5px; letter-spacing: -0.6px; }
.status > .applied { width: 377px; padding-left: 15px; letter-spacing: -0.3px; }
.status > .count { flex: 1; border: 0; padding-left: 9px; }

.subtabs { height: 42px; flex: none; display: flex; margin-top: -1px; background: #fff; color: #808080; }
.subtab { display: flex; align-items: center; height: 38px; padding-top: 2px; letter-spacing: -0.69px; }
.subtab.current { width: 95px; padding-left: 5px; gap: 9px; background: #fff; color: #2b8fd6; border: 1px solid #aaa; border-top: 0; position: relative; letter-spacing: -0.4px; }
.related { padding-left: 7px; gap: 8px; }
.user { padding-left: 28px; }

.viewer { height: 370px; margin-top: 5px; border: 2px solid #b4b4b4; border-left-width: 1px; background: #fff; padding: 0 3px 5px 4px; }
.viewer-tabs { height: 43px; display: flex; align-items: flex-end; justify-content: space-between; padding-left: 9px; }
.viewer-tab { width: 141px; height: 38px; border: 1px solid #aaa; border-bottom: 0; background: #fff; color: #2b8fd6; text-align: center; line-height: 38px; margin-bottom: -1px; position: relative; letter-spacing: -0.8px; }
.viewer-tabs .caret { border-width: 5px 5px 0; margin: 0 7px 16px 0; }
.viewer-body { height: 319px; border: 1px solid #aaa; padding: 8px 3px 3px; }
.doc-head { height: 48px; display: flex; align-items: center; padding: 0 4px 0 8px; }
.doc-title { flex: 1; display: flex; padding-top: 2px; font-size: 20px; }
.doc-title b { font-weight: 600; letter-spacing: -0.25px; }
.doc-title i { font-style: normal; width: 21px; text-align: center; }
.stapler { margin-right: 6px; }
.counter { height: 48px; display: flex; border: 1px solid #1178d2; letter-spacing: -0.9px; }
.counter strong { width: 20px; font-size: 35px; font-weight: 400; line-height: 46px; }
.counter span { line-height: 30px; }
.page { width: 92px; padding-left: 14px; gap: 9px; }
.notes { width: 140px; margin-left: 9px; padding-left: 6px; }
.notes svg { margin: 7px 15px 0 0; }
.notes strong { margin-right: 11px; }
.doc { height: 253px; margin-top: 5px; border: 4px solid #999; border-left-width: 3px; border-bottom-width: 3px; display: flex; }
.sheet { flex: 1; overflow: hidden; padding-top: 223px; }
.sheet p { width: max-content; margin: 0 0 0 294px; font: 28px/32px "Liberation Serif", serif; letter-spacing: 0.35px; transform: scaleX(1.122); transform-origin: left; }
.vscroll { width: 24px; background: #f0f0f0; display: flex; flex-direction: column; align-items: center; padding-top: 2px; }
.split { width: 24px; height: 11px; background: #e1e1e1; border-bottom: 1px solid #999; margin-bottom: 9px; }
.vthumb { width: 24px; height: 26px; background: #cdcdcd; margin-top: 8px; }
.down { margin-top: auto; margin-bottom: 8px; }
```
